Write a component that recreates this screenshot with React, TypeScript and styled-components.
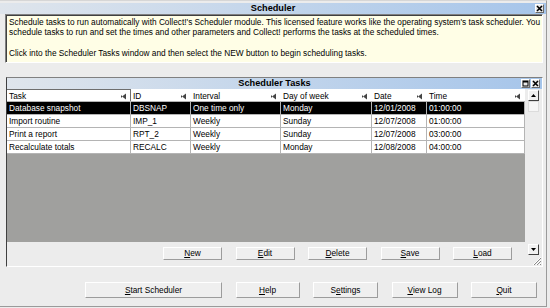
import styled, { createGlobalStyle } from 'styled-components';

const GlobalStyle = createGlobalStyle`
  html, body {
    margin: 0;
    padding: 0;
    background: #ececec;
    overflow: hidden;
  }
  #root {
    width: 550px;
    height: 308px;
  }
`;

const COLS = '124px 60px 90px 91px 55px 98px';

const tasks = [
  { task: 'Database snapshot', id: 'DBSNAP', interval: 'One time only', day: 'Monday', date: '12/01/2008', time: '01:00:00' },
  { task: 'Import routine', id: 'IMP_1', interval: 'Weekly', day: 'Sunday', date: '12/07/2008', time: '01:00:00' },
  { task: 'Print a report', id: 'RPT_2', interval: 'Weekly', day: 'Sunday', date: '12/07/2008', time: '03:00:00' },
  { task: 'Recalculate totals', id: 'RECALC', interval: 'Weekly', day: 'Monday', date: '12/08/2008', time: '04:00:00' },
];

const headers = ['Task', 'ID', 'Interval', 'Day of week', 'Date', 'Time'];

const panelButtons = [
  { label: 'New', key: 'N' },
  { label: 'Edit', key: 'E' },
  { label: 'Delete', key: 'D' },
  { label: 'Save', key: 'S' },
  { label: 'Load', key: 'L' },
];

const mainButtons = [
  { label: 'Start Scheduler', key: 'S', width: 137 },
  { label: 'Help', key: 'H', width: 64 },
  { label: 'Settings', key: 'e', width: 65 },
  { label: 'View Log', key: 'V', width: 66 },
  { label: 'Quit', key: 'Q', width: 66 },
];

const Mnemonic = ({ label, letter }: { label: string; letter: string }) => {
  const i = label.indexOf(letter);
  return (
    <>
      {label.slice(0, i)}
      <u>{label[i]}</u>
      {label.slice(i + 1)}
    </>
  );
};

const CloseGlyph = () => (
  <svg width="7" height="7" viewBox="0 0 7 7">
    <path d="M1 1 L6 6 M6 1 L1 6" stroke="#000" strokeWidth="1.6" />
  </svg>
);

const RestoreGlyph = () => (
  <svg width="7" height="7" viewBox="0 0 7 7">
    <rect x="1" y="1" width="5" height="5" fill="none" stroke="#000" strokeWidth="1" />
    <rect x="1" y="1" width="5" height="1.5" fill="#000" />
  </svg>
);

const SortArrow = () => (
  <svg width="6" height="7" viewBox="0 0 6 7">
    <polygon points="5,0.5 5,6.5 1,3.5" fill="#444" />
    <rect x="0" y="2.5" width="1" height="2" fill="#444" />
  </svg>
);

const Grip = () => (
  <svg width="11" height="11" viewBox="0 0 11 11">
    <path d="M10 2 L2 10 M10 5 L5 10 M10 8 L8 10" stroke="#fff" strokeWidth="1" />
    <path d="M10 3 L3 10 M10 6 L6 10 M10 9 L9 10" stroke="#8a8a8a" strokeWidth="1" />
  </svg>
);

const App = () => {
  return (
    <>
      <GlobalStyle />
      <Window>
        <TitleBar>
          <span />
          <TitleText>Scheduler</TitleText>
          <TitleIcons>
            <IconBox>
              <CloseGlyph />
            </IconBox>
          </TitleIcons>
        </TitleBar>

        <InfoBox>
          <InfoLine>
            Schedule tasks to run automatically with Collect!'s Scheduler module. This licensed feature works like the
            operating system's task scheduler. You schedule tasks to run and set the times and other parameters and
            Collect! performs the tasks at the scheduled times.
          </InfoLine>
          <InfoLine>Click into the Scheduler Tasks window and then select the NEW button to begin scheduling tasks.</InfoLine>
        </InfoBox>

        <TasksPanel>
          <PanelTitle>
            <span />
            <TitleText>Scheduler Tasks</TitleText>
            <TitleIcons>
              <SmallIconBox>
                <RestoreGlyph />
              </SmallIconBox>
              <SmallIconBox>
                <CloseGlyph />
              </SmallIconBox>
            </TitleIcons>
          </PanelTitle>
          <PanelBody>
            <TableColumn>
              <HeaderRow>
                {headers.map((h, i) => (
                  <HeaderCell key={h} $focused={i === 0}>
                    <span>{h}</span>
                    <SortArrow />
                  </HeaderCell>
                ))}
              </HeaderRow>
              {tasks.map((t, i) => (
                <DataRow key={t.id} $selected={i === 0}>
                  <Cell>{t.task}</Cell>
                  <Cell>{t.id}</Cell>
                  <Cell>{t.interval}</Cell>
                  <Cell>{t.day}</Cell>
                  <Cell>{t.date}</Cell>
                  <Cell>{t.time}</Cell>
                </DataRow>
              ))}
              <EmptyArea />
              <PanelButtonBar>
                {panelButtons.map((b) => (
                  <WinButton key={b.label} $width={59} $height={13}>
                    <Mnemonic label={b.label} letter={b.key} />
                  </WinButton>
                ))}
              </PanelButtonBar>
            </TableColumn>
            <ScrollColumn>
              <ScrollButton>
                <svg width="5" height="3" viewBox="0 0 5 3">
                  <polygon points="0,3 5,3 2.5,0" fill="#000" />
                </svg>
              </ScrollButton>
              <ScrollThumb />
              <ScrollTrack />
              <ScrollButton>
                <svg width="5" height="3" viewBox="0 0 5 3">
                  <polygon points="0,0 5,0 2.5,3" fill="#000" />
                </svg>
              </ScrollButton>
              <GripBox>
                <Grip />
              </GripBox>
            </ScrollColumn>
          </PanelBody>
        </TasksPanel>

        <MainButtonBar>
          {mainButtons.map((b) => (
            <WinButton key={b.label} $width={b.width} $height={16}>
              <Mnemonic label={b.label} letter={b.key} />
            </WinButton>
          ))}
        </MainButtonBar>
      </Window>
    </>
  );
};

export default App;

const Window = styled.div`
  width: 546px;
  height: 305px;
  background: #ececec;
  border-top: 1px solid #d6d6d6;
  border-right: 1px solid #9a9a9a;
  border-bottom: 1px solid #9a9a9a;
  display: flex;
  flex-direction: column;
  font-family: 'Liberation Sans', Arial, sans-serif;
  font-size: 8.3px;
  color: #000;
`;

const TitleBar = styled.div`
  margin-top: 2px;
  height: 11px;
  display: grid;
  grid-template-columns: 1fr auto 1fr;
  align-items: center;
  background: linear-gradient(to right, #dfe5ec, #a6c5ea);
`;

const TitleText = styled.span`
  font-weight: bold;
  font-size: 9.2px;
  line-height: 11px;
`;

const TitleIcons = styled.div`
  justify-self: end;
  display: flex;
  gap: 1px;
  margin-right: 2px;
`;

const IconBox = styled.span`
  width: 7px;
  height: 7px;
  display: flex;
  align-items: center;
  justify-content: center;
  background: #e8e8e8;
  border: 1px solid;
  border-color: #fff #6a6a6a #6a6a6a #fff;
`;

const SmallIconBox = styled(IconBox)`
  width: 7px;
  height: 7px;
`;

const InfoBox = styled.div`
  margin: 0 0 0 5px;
  width: 534px;
  height: 46px;
  padding: 1px 0 0 2px;
  background: #fffee6;
  border-top: 1px solid #808080;
  border-left: 1px solid #808080;
  border-right: 1px solid #fff;
  border-bottom: 1px solid #fff;
  box-shadow: inset 1px 1px 0 #404040;
  box-sizing: content-box;
`;

const InfoLine = styled.p`
  margin: 0 0 10px;
  line-height: 10px;
  padding-left: 1px;
  padding-top: 1px;
`;

const TasksPanel = styled.div`
  margin: 14px 0 0 6px;
  width: 535px;
  height: 188px;
  border-top: 1px solid #808080;
  border-left: 1px solid #404040;
  border-right: 1px solid #fff;
  border-bottom: 1px solid #fff;
  display: flex;
  flex-direction: column;
`;

const PanelTitle = styled(TitleBar)`
  margin-top: 0;
  height: 11px;
`;

const PanelBody = styled.div`
  flex: 1;
  display: flex;
  min-height: 0;
`;

const TableColumn = styled.div`
  width: 518px;
  display: flex;
  flex-direction: column;
`;

const HeaderRow = styled.div`
  display: grid;
  grid-template-columns: ${COLS};
  height: 12px;
  background: #fff;
`;

const HeaderCell = styled.div<{ $focused: boolean }>`
  display: flex;
  align-items: center;
  justify-content: space-between;
  padding: 0 3px 0 2px;
  line-height: 12px;
  border: 1px solid ${(p) => (p.$focused ? '#6e6e6e' : 'transparent')};
  border-left: none;
  box-sizing: border-box;
`;

const DataRow = styled.div<{ $selected: boolean }>`
  display: grid;
  grid-template-columns: ${COLS};
  height: 13px;
  background: ${(p) => (p.$selected ? '#000' : '#fff')};
  color: ${(p) => (p.$selected ? '#fff' : '#000')};
  border-top: 1px solid #b4b4b4;
  box-sizing: border-box;
`;

const Cell = styled.div`
  padding-left: 2px;
  line-height: 12px;
  border-right: 1px solid #b4b4b4;
  white-space: nowrap;
  overflow: hidden;
`;

const EmptyArea = styled.div`
  flex: 1;
  background: #a0a09e;
  border-top: 1px solid #b4b4b4;
`;

const PanelButtonBar = styled.div`
  height: 24px;
  display: flex;
  justify-content: flex-end;
  align-items: flex-start;
  gap: 13.5px;
  padding: 5px 13px 0 0;
  box-sizing: border-box;
`;

const WinButton = styled.button<{ $width: number; $height: number }>`
  width: ${(p) => p.$width}px;
  height: ${(p) => p.$height}px;
  padding: 0;
  margin: 0;
  font: inherit;
  color: #000;
  background: #efefef;
  border: 1px solid;
  border-color: #fff #9c9c9c #9c9c9c #fff;
  line-height: 1;
  display: flex;
  align-items: center;
  justify-content: center;
`;

const ScrollColumn = styled.div`
  width: 17px;
  display: flex;
  flex-direction: column;
  align-items: flex-end;
  padding-top: 1px;
  box-sizing: border-box;
`;

const ScrollButton = styled.div`
  width: 9px;
  height: 9px;
  margin-right: 3px;
  display: flex;
  align-items: center;
  justify-content: center;
  background: #f1f1f1;
  border: 1px solid;
  border-color: #fff #404040 #404040 #fff;
`;

const ScrollThumb = styled.div`
  width: 9px;
  height: 9px;
  margin-right: 3px;
  background: #f6f6f6;
  border: 1px solid #dcdcdc;
`;

const ScrollTrack = styled.div`
  flex: 1;
`;

const GripBox = styled.div`
  width: 11px;
  height: 11px;
  display: flex;
`;

const MainButtonBar = styled.div`
  margin-top: 15px;
  display: flex;
  justify-content: flex-end;
  gap: 13.5px;
  padding-right: 9px;
`;
